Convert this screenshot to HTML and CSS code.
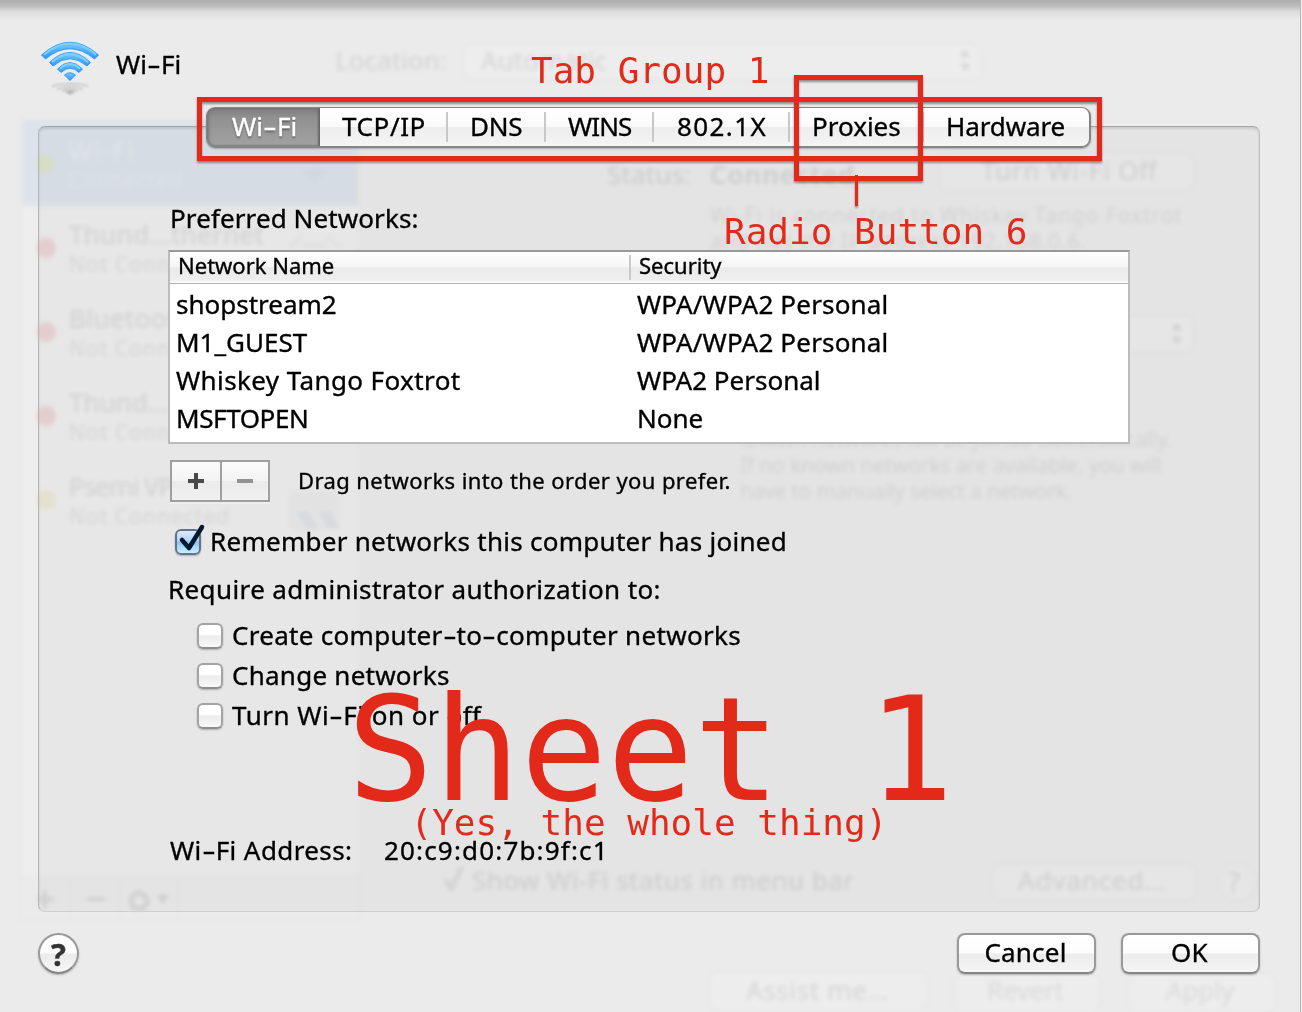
FILE: index.html
```html
<!DOCTYPE html>
<html lang="en">
<head>
<meta charset="utf-8">
<title>Network – Wi-Fi</title>
<link rel="stylesheet" href="styles.css">
</head>
<body>
<svg class="backdrop" width="1302" height="1012" viewBox="0 0 1302 1012" aria-hidden="true">
  <defs>
    <filter id="soft" x="0" y="0" width="1302" height="1012" filterUnits="userSpaceOnUse" color-interpolation-filters="sRGB"><feGaussianBlur stdDeviation="2.2"/></filter>
  </defs>
  <g filter="url(#soft)">
    <rect x="22" y="206" width="336" height="671" fill="#fff" opacity=".16"/>
    <rect x="22" y="120" width="336" height="86" fill="#dce3ea"/>
    <g fill="#fff" fill-opacity=".1" stroke="#000" stroke-opacity=".035">
      <rect x="464" y="44" width="517" height="35" rx="6"/>
      <rect x="940" y="154" width="254" height="36" rx="6"/>
      <rect x="720" y="316" width="473" height="36" rx="6"/>
      <rect x="993" y="864" width="202" height="36" rx="6"/>
      <rect x="710" y="972" width="217" height="38" rx="6"/>
      <rect x="954" y="974" width="146" height="38" rx="6"/>
      <rect x="1129" y="974" width="146" height="38" rx="6"/>
      <circle cx="1237" cy="882" r="19"/>
      <g fill="none"><rect x="20" y="877" width="340" height="43"/>
      <path d="M70 877v43M120 877v43M179 877v43"/></g>
    </g>
    <circle cx="45" cy="164" r="9" fill="#dbe4c9"/>
    <circle cx="46" cy="248" r="10" fill="#ebd3d4"/>
    <circle cx="46" cy="332" r="10" fill="#ebd3d4"/>
    <circle cx="46" cy="416" r="10" fill="#ebd3d4"/>
    <circle cx="46" cy="500" r="10" fill="#ebe7d4"/>
    <g fill="#e5eaee">
      <text x="68" y="160" font-size="26" font-weight="600" textLength="66">Wi-Fi</text>
      <text x="68" y="188" font-size="22" textLength="114">Connected</text>
    </g>
    <g class="ghost">
      <text x="335" y="70" textLength="112">Location:</text>
      <text x="481" y="70" textLength="126">Automatic</text>
      <text x="607" y="184" textLength="84">Status:</text>
      <text x="710" y="184" font-weight="600" textLength="144">Connected</text>
      <text x="981" y="180" textLength="176">Turn Wi-Fi Off</text>
      <text x="69" y="244" textLength="195">Thund…thernet</text>
      <text x="69" y="328" textLength="124">Bluetooth</text>
      <text x="69" y="412">Thund…</text>
      <text x="69" y="496" textLength="124">Psemi VPN</text>
      <text x="472" y="890" textLength="382">Show Wi-Fi status in menu bar</text>
      <text x="1018" y="890" textLength="147">Advanced…</text>
      <text x="746" y="1000" textLength="142">Assist me…</text>
      <text x="1228" y="892" font-size="28">?</text>
      <path d="M445 879l6 10 11-22M36 899h18M45 890v18M87 899h18" fill="none" stroke="#000" stroke-width="3"/>
      <circle cx="139" cy="901" r="8" fill="none" stroke="#000" stroke-width="4"/>
      <path d="M157 895h12l-6 9zM960 57l5-7 5 7zM960 64l5 7 5-7zM1172 330l5-7 5 7zM1172 337l5 7 5-7z"/>
    </g>
    <g class="ghost ghost-small">
      <text x="69" y="272" textLength="160">Not Connected</text>
      <text x="69" y="356" textLength="160">Not Connected</text>
      <text x="69" y="440" textLength="160">Not Connected</text>
      <text x="69" y="524" textLength="160">Not Connected</text>
      <text x="710" y="223" textLength="472">Wi-Fi is connected to Whiskey Tango Foxtrot</text>
      <text x="710" y="249" textLength="376">and has the IP address 192.168.0.6.</text>
      <text x="740" y="447" textLength="432">Known networks will be joined automatically.</text>
      <text x="740" y="473" textLength="422">If no known networks are available, you will</text>
      <text x="740" y="499" textLength="332">have to manually select a network.</text>
      <text x="987" y="1000" font-size="26" textLength="77">Revert</text>
      <text x="1166" y="1000" font-size="26" textLength="68">Apply</text>
    </g>
    <g fill="#71839a" opacity=".12">
      <rect x="289" y="492" width="50" height="38" rx="3" opacity=".3"/>
      <path d="M295 511h12l12 18h-12zM318 511h12l10 18h-12z"/>
      <path d="M290 247l12-11M326 236l14 11M303 246h24" stroke="#71839a" stroke-width="3" opacity=".6"/>
      <path d="M302 171q13-7 26 0l-13 13z" opacity=".25"/>
    </g>
  </g>
</svg>

<main class="sheet">
  <header class="title">
    <svg width="60" height="56" viewBox="0 0 60 56" aria-hidden="true">
      <defs>
        <linearGradient id="wave" x1="0" y1="0" x2="0" y2="1"><stop offset="0" stop-color="#75ccff"/><stop offset="1" stop-color="#2a98ff"/></linearGradient>
        <filter id="haze"><feGaussianBlur stdDeviation=".8"/></filter>
      </defs>
      <g fill="url(#wave)" stroke="#168bfd" stroke-width=".8" stroke-linejoin="round">
        <path d="M1.500 14Q30-11.500 58.500 14L54.500 18Q30-2.500 5.500 18L1.500 14Z"/>
        <path d="M9.500 21.500Q30 1.500 50.500 21.500L47 25Q30 10.500 13 25L9.500 21.500Z"/>
        <path d="M17.500 28Q30 15 42.500 28L39 31.500Q30 23 21 31.500L17.500 28Z"/>
        <path d="M24.500 34Q30 29.500 35.500 34L30 39.500Z"/>
      </g>
      <g fill="none" stroke="#7fd0ff" stroke-width="2">
        <path d="M4 13.700Q30-8.700 56 13.700M12 21.200Q30 5 48 21.200M20 27.700Q30 18.200 40 27.700"/>
      </g>
      <g filter="url(#haze)" fill="none" stroke="#999" stroke-opacity=".5" stroke-width="1.500">
        <path d="M12 45Q30 40 48 45M17 48Q30 43 43 48M22 50Q30 46 38 50"/><path d="M26 51l4-1 4 1-4 2z" fill="#bbb"/>
      </g>
    </svg>
    <h1>Wi<span class="dash">-</span>Fi</h1>
  </header>

  <nav class="tabs">
    <a class="tab tab-wifi selected">Wi<span class="dash">-</span>Fi</a>
    <a class="tab tab-tcp">TCP/IP</a>
    <a class="tab tab-dns">DNS</a>
    <a class="tab tab-wins">WINS</a>
    <a class="tab tab-8021x">802.1X</a>
    <a class="tab tab-proxies">Proxies</a>
    <a class="tab tab-hardware">Hardware</a>
  </nav>

  <section class="pane">
    <h2 class="line t-preferred">Preferred Networks:</h2>
    <div class="networks">
      <div class="net-head"><span>Network Name</span><span class="t-security">Security</span></div>
      <div class="net-row"><span>shopstream2</span><span class="t-wpa">WPA/WPA2 Personal</span></div>
      <div class="net-row"><span>M1_GUEST</span><span class="t-wpa">WPA/WPA2 Personal</span></div>
      <div class="net-row"><span class="t-whiskey">Whiskey Tango Foxtrot</span><span>WPA2 Personal</span></div>
      <div class="net-row"><span class="t-msft">MSFTOPEN</span><span>None</span></div>
    </div>
    <div class="list-tools">
      <div class="plus-minus">
        <svg width="48" height="38" viewBox="0 0 48 38"><path d="M16 19h16M24 11v16" stroke="#484848" stroke-width="4"/></svg>
        <svg width="46" height="38" viewBox="0 0 46 38"><path d="M15 19h16" stroke="#929292" stroke-width="4"/></svg>
      </div>
      <p class="t-drag">Drag networks into the order you prefer.</p>
    </div>
    <label class="line remember"><i class="box checked"><svg width="34" height="34" viewBox="0 0 34 34"><path d="M7 17l7 8L27 4" fill="none" stroke="#06182f" stroke-width="4.500" stroke-linecap="round" stroke-linejoin="round"/></svg></i><span class="t-remember">Remember networks this computer has joined</span></label>
    <p class="line require">Require administrator authorization to:</p>
    <div class="options">
      <label class="line"><i class="box"></i><span class="t-create">Create computer<span class="dash">-</span>to<span class="dash">-</span>computer networks</span></label>
      <label class="line"><i class="box"></i><span class="t-change">Change networks</span></label>
      <label class="line"><i class="box"></i><span class="t-turn">Turn Wi<span class="dash">-</span>Fi on or off</span></label>
    </div>
    <div class="line address"><span class="t-address">Wi<span class="dash">-</span>Fi Address:</span><span class="t-mac">20:c9:d0:7b:9f:c1</span></div>
  </section>

  <footer class="actions">
    <button class="help">?</button>
    <button class="push">Cancel</button>
    <button class="push">OK</button>
  </footer>
</main>

<svg class="notes" width="1302" height="1012" viewBox="0 0 1302 1012">
  <g class="frames">
    <rect x="199.500" y="99.500" width="900" height="59"/>
    <rect x="796.500" y="77.500" width="124" height="101"/>
    <path d="M856.500 175v31" stroke-width="3"/>
  </g>
  <g class="captions">
    <text x="531" y="83">Tab Group 1</text>
    <text x="724" y="244">Radio Button 6</text>
    <text class="big" x="347" y="800">Sheet 1</text>
    <text x="410.500" y="835">(Yes, the whole thing)</text>
  </g>
</svg>
</body>
</html>
```
FILE: styles.css
```css
* { box-sizing: border-box; }
body {
  margin: 0;
  width: 1302px;
  height: 1012px;
  overflow: hidden;
  position: relative;
  background: #ebebeb;
  color: #000;
  font: 26px/32px "Noto Sans", sans-serif;
}
h1, h2, p { margin: 0; font: inherit; }
span, h1, h2, p { white-space: nowrap; }

.backdrop, .notes { position: absolute; left: 0; top: 0; pointer-events: none; }
.notes { z-index: 2; }
.backdrop text { font-family: "Noto Sans", sans-serif; }
.ghost { font-size: 26px; opacity: .1; }
.ghost-small { font-size: 21px; opacity: .08; }

.sheet {
  position: relative;
  display: flex;
  flex-direction: column;
  height: 1012px;
  border-right: 1px solid #f2f2f2;
  box-shadow: inset -1px 0 #b4b4b4;
  background: linear-gradient(#adadad, rgba(180, 180, 180, .85) 6px, rgba(210, 210, 210, .55) 12px, rgba(235, 235, 235, 0) 20px);
  -webkit-text-stroke: .35px;
}
/* wide hyphen, as in the system font */
.dash { display: inline-block; width: 14px; text-align: center; letter-spacing: 0; transform: scaleX(1.6); }

.title { display: flex; height: 107px; padding: 41px 0 0 40px; gap: 16px; }
.title h1 { margin-top: 7px; }

.tabs {
  display: flex;
  position: relative;
  z-index: 1;
  width: 885px;
  height: 41px;
  margin: 0 0 -22px 206px;
  border: 2px solid #858585;
  border-width: 1px 2px 2px 1px;
  border-radius: 9px;
  background: linear-gradient(#fff 0, #fafafa 49%, #ededed 51%, #f5f5f5);
  box-shadow: 0 1px 2px rgba(0, 0, 0, .25);
}
.tab { position: relative; padding-top: 2px; white-space: nowrap; }
.tab + .tab::before {
  content: "";
  position: absolute;
  left: 0;
  top: 4px;
  width: 2px;
  height: 30px;
  background: #c8c8c8;
}
.tab.selected {
  color: #fff;
  text-shadow: 0 2px 2px rgba(0, 0, 0, .4);
  border-radius: 7px 0 0 7px;
  background: linear-gradient(#7c7c7c, #909090 9px, #a2a2a2);
  box-shadow: inset 2px 0 3px #777, inset -2px 0 2px #666;
}
.tab.selected + .tab::before { display: none; }
.tab-wifi { width: 113px; padding-left: 25px; }
.tab-tcp { width: 126px; padding-left: 22px; letter-spacing: .6px; }
.tab-dns { width: 98px; padding-left: 24px; letter-spacing: -.2px; }
.tab-wins { width: 108px; padding-left: 24px; letter-spacing: -.9px; }
.tab-8021x { width: 136px; padding-left: 25px; letter-spacing: 1.4px; }
.tab-proxies { width: 134px; padding-left: 24px; }
.tab-hardware { flex: 1; padding-left: 24px; letter-spacing: -.1px; }

.pane {
  height: 786px;
  margin: 0 41px 0 38px;
  padding: 75px 0 0 129px;
  border: 1px solid #c3c3c3;
  border-color: #a4a4a4 #bdbdbd #cfcfcf #b5b5b5;
  border-radius: 7px;
  background: rgba(0, 0, 0, .028);
  box-shadow: inset 0 2px 3px rgba(0, 0, 0, .12);
}
.line { display: flex; align-items: center; height: 32px; }
.t-preferred { padding-left: 2px; letter-spacing: .1px; }

.networks {
  width: 962px;
  height: 194px;
  margin: 16px 0 0 0;
  border: 2px solid #bcbcbc;
  border-top-color: #999;
  background: #fff;
}
.net-head, .net-row { display: grid; grid-template-columns: 460px 1fr; }
.net-head {
  height: 32px;
  padding-left: 8px;
  border-bottom: 1px solid #b2b2b2;
  background: linear-gradient(#fff, #f5f5f5 49%, #ebebeb 50%, #eee 90%, #fff);
  font-size: 22px;
  line-height: 26px;
}
.net-head .t-security {
  border-left: 2px solid #c9c9c9;
  margin: 3px 0 3px -9px;
  padding-left: 8px;
  line-height: 20px;
}
.net-row { height: 38px; padding-left: 6px; line-height: 40px; }
.net-row span + span { padding-left: 1px; }
.t-wpa { letter-spacing: .18px; }
.t-whiskey { letter-spacing: .4px; }
.t-msft { letter-spacing: -.4px; }

.list-tools { display: flex; height: 42px; margin: 16px 0 0 2px; }
.plus-minus {
  display: flex;
  gap: 2px;
  width: 100px;
  padding: 2px;
  background: #9f9f9f;
  box-shadow: 0 2px #eee;
}
.plus-minus svg { flex: none; background: linear-gradient(#fbfbfb, #f3f3f3 50%, #ebebeb 51%, #f0f0f0); }
.t-drag { margin-left: 28px; font-size: 22px; line-height: 40px; letter-spacing: .41px; }

.box {
  flex: none;
  width: 26px;
  height: 26px;
  border: 2px solid #a3a3a3;
  border-bottom-color: #8d8d8d;
  border-radius: 6px;
  background: linear-gradient(#fff 45%, #ececec 50%, #f8f8f8);
  box-shadow: 0 1px 2px rgba(0, 0, 0, .25);
}
.box.checked { border-color: #65728a; background: linear-gradient(#dceafa, #b0d4f5 45%, #8cc5f3 50%, #c8f0ff); }
.box svg { display: block; margin: -8px 0 0 -2px; }
.remember { margin-top: 23px; padding-left: 7px; gap: 9px; }
.remember .box { margin-top: 2px; }
.t-remember { letter-spacing: .27px; }
.require { margin-top: 16px; letter-spacing: .39px; }
.options { display: grid; gap: 8px; margin: 14px 0 0 29px; }
.options .line { gap: 9px; }
.options .box { margin-top: 2px; }
.t-create { letter-spacing: .3px; }
.t-change { letter-spacing: .25px; }
.t-turn { letter-spacing: .5px; }
.address { margin-top: 103px; padding-left: 2px; }
.t-address { width: 214px; letter-spacing: .4px; }
.t-mac { letter-spacing: 1.17px; }

.actions { display: flex; gap: 25px; padding: 21px 41px 0 38px; }
.actions button { padding: 0; color: #000; font: inherit; border: 2px solid #999; border-bottom-color: #858585; box-shadow: 0 1px 2px rgba(0, 0, 0, .25); background: linear-gradient(#fff 0, #fcfcfc 49%, #ebebeb 51%, #f6f6f6); }
.actions .push { width: 139px; height: 41px; border-radius: 8px; padding: 0 2px 4px 0; letter-spacing: .2px; -webkit-text-stroke: .35px; }
.actions .help { width: 41px; height: 41px; margin: 0 auto 0 0; border-radius: 50%; color: #333; font-weight: 700; font-size: 31px; line-height: 36px; }

.frames { fill: none; stroke: #e2291a; stroke-width: 5px; filter: drop-shadow(0 2px 1px rgba(0, 0, 0, .4)); }
.captions { fill: #e2291a; font: 36px "DejaVu Sans Mono", monospace; }
.captions .big { font-size: 144px; }
```
